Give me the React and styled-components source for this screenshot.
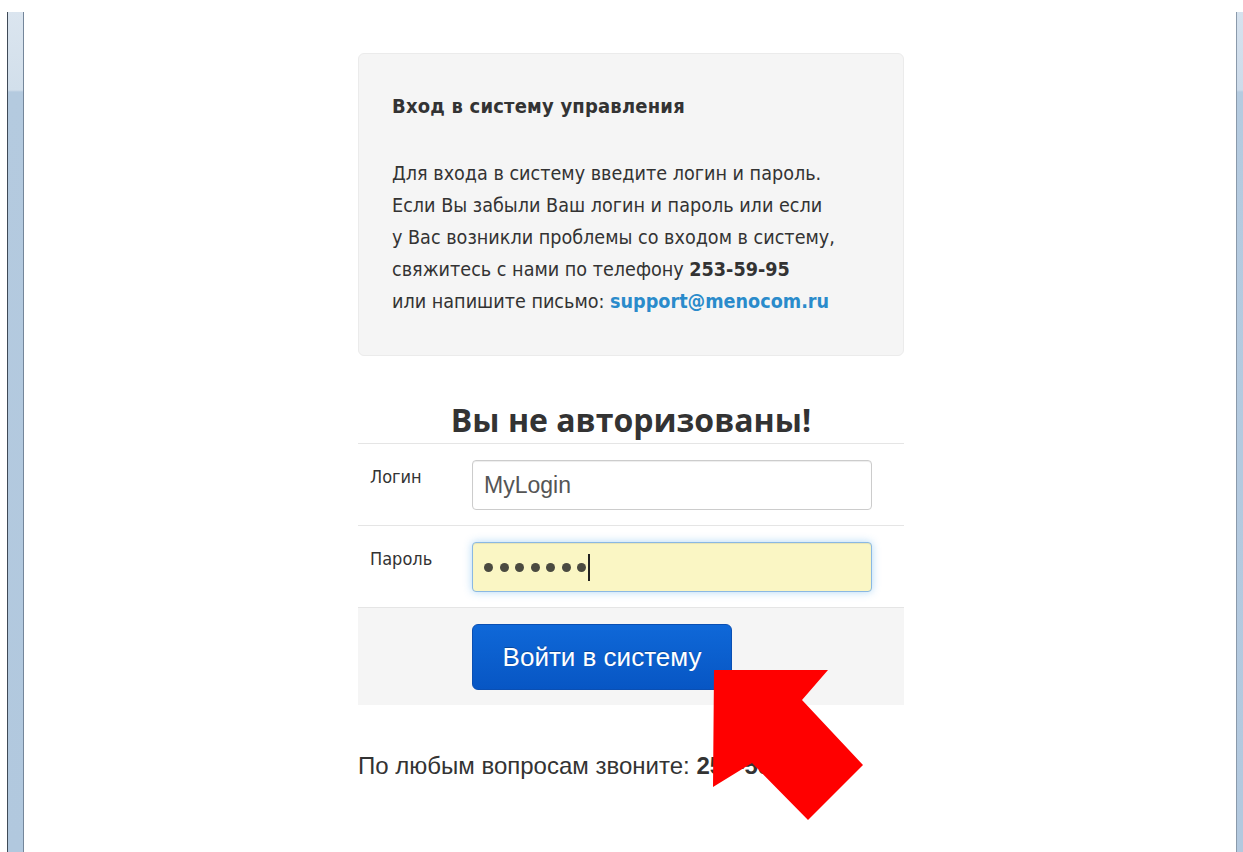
import React from 'react'
import styled, { createGlobalStyle } from 'styled-components'

const GlobalStyle = createGlobalStyle`
  html, body {
    margin: 0;
    padding: 0;
    background: #ffffff;
  }
  body {
    width: 1243px;
    height: 852px;
    overflow: hidden;
  }
`;

const Login = () => {
  return (
    <>
      <GlobalStyle />
      <Screen>
        <LeftEdge />
        <Content>
          <Column>
            <InfoCard>
              <CardTitle>Вход в систему управления</CardTitle>
              <CardText>
                Для входа в систему введите логин и пароль.<br />
                Если Вы забыли Ваш логин и пароль или если<br />
                у Вас возникли проблемы со входом в систему,<br />
                свяжитесь с нами по телефону <b>253-59-95</b><br />
                или напишите письмо: <Mail href="mailto:support@menocom.ru">support@menocom.ru</Mail>
              </CardText>
            </InfoCard>

            <Heading>Вы не авторизованы!</Heading>

            <Form onSubmit={(e) => e.preventDefault()}>
              <Row>
                <Label>Логин</Label>
                <TextInput type="text" defaultValue="MyLogin" />
              </Row>
              <Row>
                <Label>Пароль</Label>
                <Field $autofill>
                  <Dots>
                    {Array.from({ length: 7 }).map((_, i) => <Dot key={i} />)}
                  </Dots>
                  <Caret />
                </Field>
              </Row>
              <Actions>
                <Submit type="submit">Войти в систему</Submit>
              </Actions>
            </Form>

            <Footer>По любым вопросам звоните: <b>253-59-95</b></Footer>
          </Column>
        </Content>
        <RightEdge />

        <Pointer viewBox="0 0 180 170" width="180" height="170">
          <polygon
            points="14,10 128,10 102,40 163,105 108,160 52,103 13,127"
            fill="#ff0000"
          />
        </Pointer>
      </Screen>
    </>
  )
}

const Screen = styled.div`
  position: relative;
  box-sizing: border-box;
  height: 852px;
  padding-top: 12px;
  display: flex;
`;

const LeftEdge = styled.div`
  width: 15px;
  margin-left: 7px;
  border-left: 1px solid #3f4a57;
  border-right: 1px solid #74869a;
  background: linear-gradient(
    to bottom,
    #dbe5ef 0,
    #d2dfeb 78px,
    #b4cadf 80px,
    #b1c8de 100%
  );
`;

const RightEdge = styled.div`
  width: 6px;
  border-left: 1px solid #8b9aab;
  background: linear-gradient(
    to bottom,
    #d6e2ee 0,
    #cddbea 78px,
    #b5cbe0 80px,
    #b3c9df 100%
  );
`;

const Content = styled.main`
  flex: 1;
  display: flex;
  justify-content: center;
  padding-left: 2px;
  background: #ffffff;
`;

const Column = styled.div`
  width: 546px;
  display: flex;
  flex-direction: column;
`;

const InfoCard = styled.section`
  margin-top: 41px;
  padding: 42px 20px 37px 33px;
  background: #f5f5f5;
  border: 1px solid #ebebeb;
  border-radius: 6px;
  color: #333333;
  font-family: "DejaVu Sans Condensed", "DejaVu Sans", sans-serif;
`;

const CardTitle = styled.h4`
  margin: 0 0 42px;
  font-size: 20px;
  line-height: 20px;
  font-weight: bold;
  letter-spacing: 0.2px;
  color: #333333;
`;

const CardText = styled.p`
  margin: 0;
  font-size: 19.6px;
  line-height: 32px;
  white-space: nowrap;

  b {
    font-weight: bold;
    color: #333333;
  }
`;

const Mail = styled.a`
  color: #2a8bcb;
  font-weight: bold;
  text-decoration: none;
`;

const Heading = styled.h2`
  margin: 44px 0 3px;
  text-align: center;
  font-family: "Open Sans", sans-serif;
  font-size: 32px;
  line-height: 40px;
  font-weight: 700;
  color: #333333;
`;

const Form = styled.form`
  margin: 0;
`;

const Row = styled.div`
  display: flex;
  align-items: flex-start;
  padding: 16px 32px 15px 12px;
  border-top: 1px solid #e5e5e5;
`;

const Label = styled.label`
  width: 102px;
  padding-top: 5px;
  font-family: "DejaVu Sans Condensed", "DejaVu Sans", sans-serif;
  font-size: 18px;
  line-height: 24px;
  color: #333333;
`;

const TextInput = styled.input`
  box-sizing: border-box;
  width: 400px;
  height: 50px;
  margin: 0;
  padding: 0 11px;
  border: 1px solid #cccccc;
  border-radius: 4px;
  background: #ffffff;
  box-shadow: inset 0 1px 1px rgba(0, 0, 0, 0.075);
  font-family: "Liberation Sans", Arial, sans-serif;
  font-size: 23px;
  color: #555555;
  outline: none;
`;

const Field = styled.div`
  box-sizing: border-box;
  width: 400px;
  height: 50px;
  padding: 0 11px;
  display: flex;
  align-items: center;
  border: 1px solid ${({ $autofill }) => ($autofill ? '#8ab8e3' : '#cccccc')};
  border-radius: 4px;
  background: ${({ $autofill }) => ($autofill ? '#faf6c4' : '#ffffff')};
  box-shadow: ${({ $autofill }) =>
    $autofill
      ? 'inset 0 1px 1px rgba(0,0,0,0.075), 0 0 8px rgba(82,168,236,0.45)'
      : 'inset 0 1px 1px rgba(0,0,0,0.075)'};
`;

const Dots = styled.span`
  display: flex;
  gap: 6.5px;
`;

const Dot = styled.span`
  width: 9px;
  height: 9px;
  border-radius: 50%;
  background: #4a4a40;
`;

const Caret = styled.span`
  width: 1.5px;
  height: 27px;
  margin-left: 2px;
  background: #222222;
`;

const Actions = styled.div`
  padding: 16px 0 15px 114px;
  background: #f5f5f5;
  border-top: 1px solid #e5e5e5;
`;

const Submit = styled.button`
  box-sizing: border-box;
  width: 260px;
  height: 66px;
  padding: 0;
  border: 1px solid #0a4fb3;
  border-radius: 6px;
  background: linear-gradient(to bottom, #0f68d8, #0756c4);
  color: #ffffff;
  font-family: "Liberation Sans", Arial, sans-serif;
  font-size: 26px;
  text-shadow: 0 -1px 0 rgba(0, 0, 0, 0.25);
  cursor: pointer;
`;

const Footer = styled.p`
  margin: 46px 0 0;
  font-family: "Liberation Sans", Arial, sans-serif;
  font-size: 24px;
  line-height: 30px;
  color: #333333;

  b {
    font-weight: bold;
  }
`;

const Pointer = styled.svg`
  position: absolute;
  left: 700px;
  top: 660px;
`;

export default Login
